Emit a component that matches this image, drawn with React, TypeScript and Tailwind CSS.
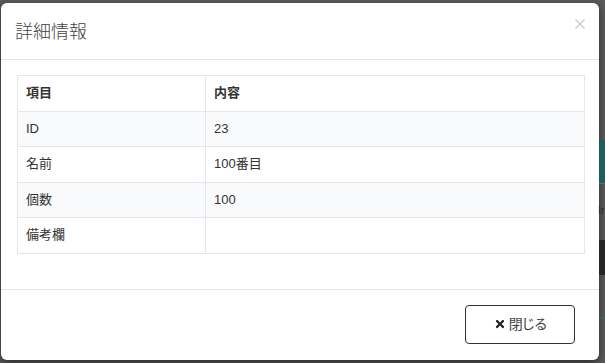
import React from 'react';
import { FaTimes } from 'react-icons/fa';

const rows = [
  { label: 'ID', value: '23' },
  { label: '名前', value: '100番目' },
  { label: '個数', value: '100' },
  { label: '備考欄', value: '' },
];

const font = { fontFamily: '"Liberation Sans", "Noto Sans CJK JP", sans-serif' };

export default function App() {
  return (
    <div className="w-[605px] h-[363px] bg-[#5a5a5a] flex overflow-hidden" style={font}>
      {/* modal */}
      <div className="ml-[1px] mt-[3px] w-[598px] h-[357px] shrink-0 bg-white rounded-[6px] shadow-[0_3px_9px_rgba(0,0,0,0.5)] flex flex-col text-[#333]">
        <div className="h-[57px] pl-[14px] pr-[14px] border-b border-[#e5e5e5] flex items-start justify-between">
          <h4 className="mt-[17px] text-[18px] leading-[24px] font-light text-[#444]">詳細情報</h4>
          <button className="mt-[16px] text-[#c8c8c8]">
            <svg width="10" height="10" viewBox="0 0 10 10" className="block">
              <path d="M0.5 0.5 L9.5 9.5 M9.5 0.5 L0.5 9.5" stroke="currentColor" strokeWidth="1.2" fill="none" />
            </svg>
          </button>
        </div>

        <div className="px-[16px] pt-[15px] pb-[35px] border-b border-[#e5e5e5]">
          <table className="w-[568px] border-collapse text-[13px] leading-[18.6px]">
            <thead>
              <tr>
                <th className="w-[188px] border border-[#e3e7ec] px-[8px] py-[8px] text-left font-bold">項目</th>
                <th className="border border-[#e3e7ec] px-[8px] py-[8px] text-left font-bold">内容</th>
              </tr>
            </thead>
            <tbody>
              {rows.map((r, i) => (
                <tr key={r.label} className={i % 2 === 0 ? 'bg-[#f9fafc]' : 'bg-white'}>
                  <td className="border border-[#e3e7ec] px-[8px] py-[8px]">{r.label}</td>
                  <td className="border border-[#e3e7ec] px-[8px] py-[8px]">{r.value || '\u00a0'}</td>
                </tr>
              ))}
            </tbody>
          </table>
        </div>

        <div className="flex-1 flex items-start justify-end pt-[15px] pr-[24px]">
          <button className="w-[110px] h-[39px] border border-[#333] rounded-[4px] flex items-center justify-center gap-[3px] text-[14px] text-[#444]">
            <FaTimes size={12} className="text-[#222]" />
            <span className="tracking-[-1.5px]">閉じる</span>
          </button>
        </div>
      </div>

      {/* page behind the backdrop */}
      <div className="flex-1 flex flex-col">
        <div className="h-[140px]" />
        <div className="h-[43px] bg-[#1d5e5e]" />
        <div className="h-[20px] border-t border-[#6a6a6a]" />
        <div className="h-[14px] text-[11px] leading-[14px] text-[#2a2a4a] -ml-[1px]">Ir</div>
        <div className="h-[23px]" />
        <div className="h-[35px] bg-[#262626]" />
        <div className="h-[42px]" />
        <div className="h-[1px] bg-[#2a6f6f]" />
      </div>
    </div>
  );
}
